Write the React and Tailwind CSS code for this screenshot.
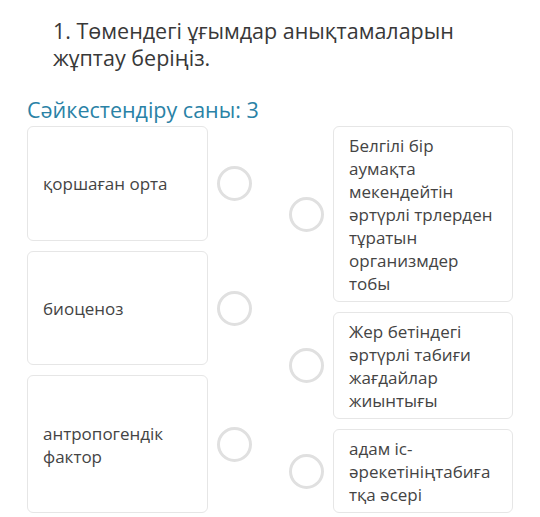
const leftItems = ["қоршаған орта", "биоценоз", "антропогендік фактор"];

const rightItems = [
  "Белгілі бір аумақта мекендейтін әртүрлі трлерден тұратын организмдер тобы",
  "Жер бетіндегі әртүрлі табиғи жағдайлар жиынтығы",
  "адам іс-әрекетініңтабиғатқа әсері",
];

function Circle() {
  return (
    <div className="w-[35px] h-[35px] shrink-0 rounded-full border-[3px] border-[#e0e0e0] bg-white" />
  );
}

export default function App() {
  return (
    <div
      className="w-[540px] h-[517px] bg-white text-[#333] overflow-hidden"
      style={{ fontFamily: '"Open Sans", "Noto Sans", sans-serif' }}
    >
      {/* Question */}
      <div className="pl-[53px] pr-[40px] pt-[17px] text-[21.5px] leading-[27px] text-[#383838]">
        1. Төмендегі ұғымдар анықтамаларын жұптау беріңіз.
      </div>

      <div className="pl-[27px] mt-[25px] text-[21.5px] leading-[27px] text-[#2a82a6]">
        Сәйкестендіру саны: 3
      </div>

      <div className="flex px-[27px] mt-[3px] text-[17px] leading-[23px] text-[#444]">
        {/* left column */}
        <div className="flex flex-col gap-[10px]">
          {leftItems.map((t) => (
            <div key={t} className="grow flex items-center gap-[9px]">
              <div className="w-[181px] self-stretch flex items-center rounded-md border border-[#e6e6e6] px-[15px] pt-[7px] pb-[6px]">
                {t}
              </div>
              <Circle />
            </div>
          ))}
        </div>

        {/* right column */}
        <div className="flex flex-col gap-[10px] ml-[37px]">
          {rightItems.map((t) => (
            <div key={t} className="flex items-center gap-[9px]">
              <Circle />
              <div className="w-[180px] rounded-md border border-[#e6e6e6] pl-[15px] pr-[19px] pt-[7px] pb-[6px] break-words">
                {t}
              </div>
            </div>
          ))}
        </div>
      </div>
    </div>
  );
}
